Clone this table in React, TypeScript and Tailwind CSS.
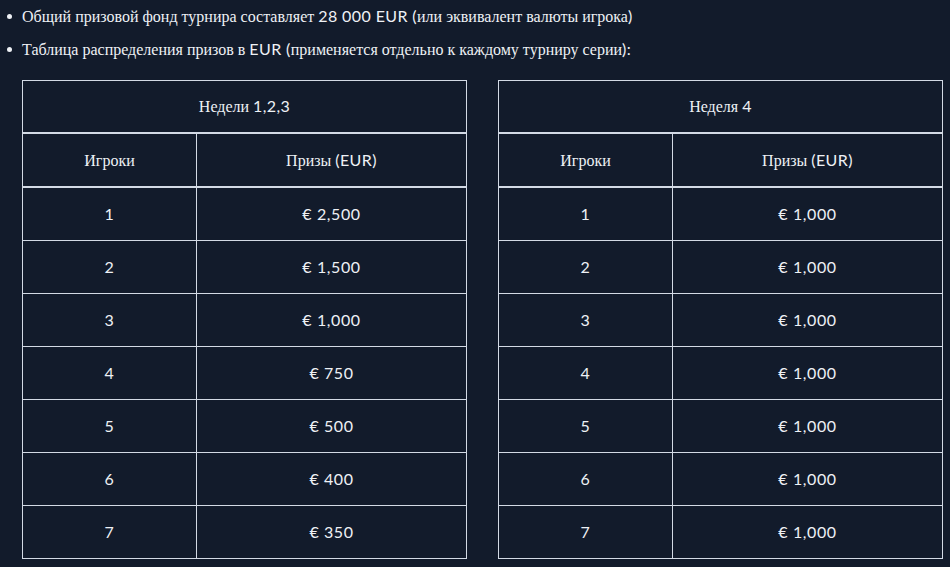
import React from "react";

const CYR = /[\u0400-\u04FF]/;

const Mixed: React.FC<{ text: string }> = ({ text }) => {
  const runs: { s: string; cyr: boolean }[] = [];
  for (const ch of text) {
    const last = runs[runs.length - 1];
    const isCyr = CYR.test(ch) || (ch === " " && !!last && last.cyr);
    if (last && last.cyr === isCyr) last.s += ch;
    else runs.push({ s: ch, cyr: isCyr });
  }
  return (
    <span>
      {runs.map((r, i) =>
        r.cyr ? (
          <span key={i} className="font-['Liberation_Serif']">
            {r.s}
          </span>
        ) : (
          <span key={i} className="font-['Lato'] tracking-[0.4px]">
            {r.s}
          </span>
        )
      )}
    </span>
  );
};

const Bullet: React.FC<{ text: string }> = ({ text }) => (
  <li className="flex items-center h-[33px]">
    <span className="w-[22px] flex justify-center pr-[3px]">
      <span className="w-[5px] h-[5px] rounded-full bg-[#eef1f5]" />
    </span>
    <span className="text-[16px]">
      <Mixed text={text} />
    </span>
  </li>
);

const PrizeTable: React.FC<{ title: string; prizes: string[] }> = ({
  title,
  prizes,
}) => (
  <div className="w-[445px] border border-[#d3dae5] text-[16px]">
    <div className="h-[53px] flex items-center justify-center border-b-2 border-[#d3dae5]">
      <Mixed text={title} />
    </div>
    <div className="grid grid-cols-[174px_1fr] h-[54px] border-b-2 border-[#d3dae5]">
      <div className="flex items-center justify-center border-r border-[#d3dae5]">
        <Mixed text="Игроки" />
      </div>
      <div className="flex items-center justify-center">
        <Mixed text="Призы (EUR)" />
      </div>
    </div>
    {prizes.map((prize, i) => (
      <div
        key={i}
        className={
          i < prizes.length - 1
            ? "grid grid-cols-[174px_1fr] h-[53px] border-b border-[#d3dae5] font-['Lato'] tracking-[0.6px]"
            : "grid grid-cols-[174px_1fr] h-[52px] font-['Lato'] tracking-[0.6px]"
        }
      >
        <div className="flex items-center justify-center border-r border-[#d3dae5]">
          {i + 1}
        </div>
        <div className="flex items-center justify-center">€ {prize}</div>
      </div>
    ))}
  </div>
);

export default function App() {
  return (
    <div className="w-full h-[567px] overflow-hidden bg-[#121b2b] text-[#eef1f5]">
      <ul>
        <Bullet text="Общий призовой фонд турнира составляет 28 000 EUR (или эквивалент валюты игрока)" />
        <Bullet text="Таблица распределения призов в EUR (применяется отдельно к каждому турниру серии):" />
      </ul>
      <div className="flex gap-[31px] pl-[22px] pt-[14px]">
        <PrizeTable
          title="Недели 1,2,3"
          prizes={["2,500", "1,500", "1,000", "750", "500", "400", "350"]}
        />
        <PrizeTable
          title="Неделя 4"
          prizes={["1,000", "1,000", "1,000", "1,000", "1,000", "1,000", "1,000"]}
        />
      </div>
    </div>
  );
}
